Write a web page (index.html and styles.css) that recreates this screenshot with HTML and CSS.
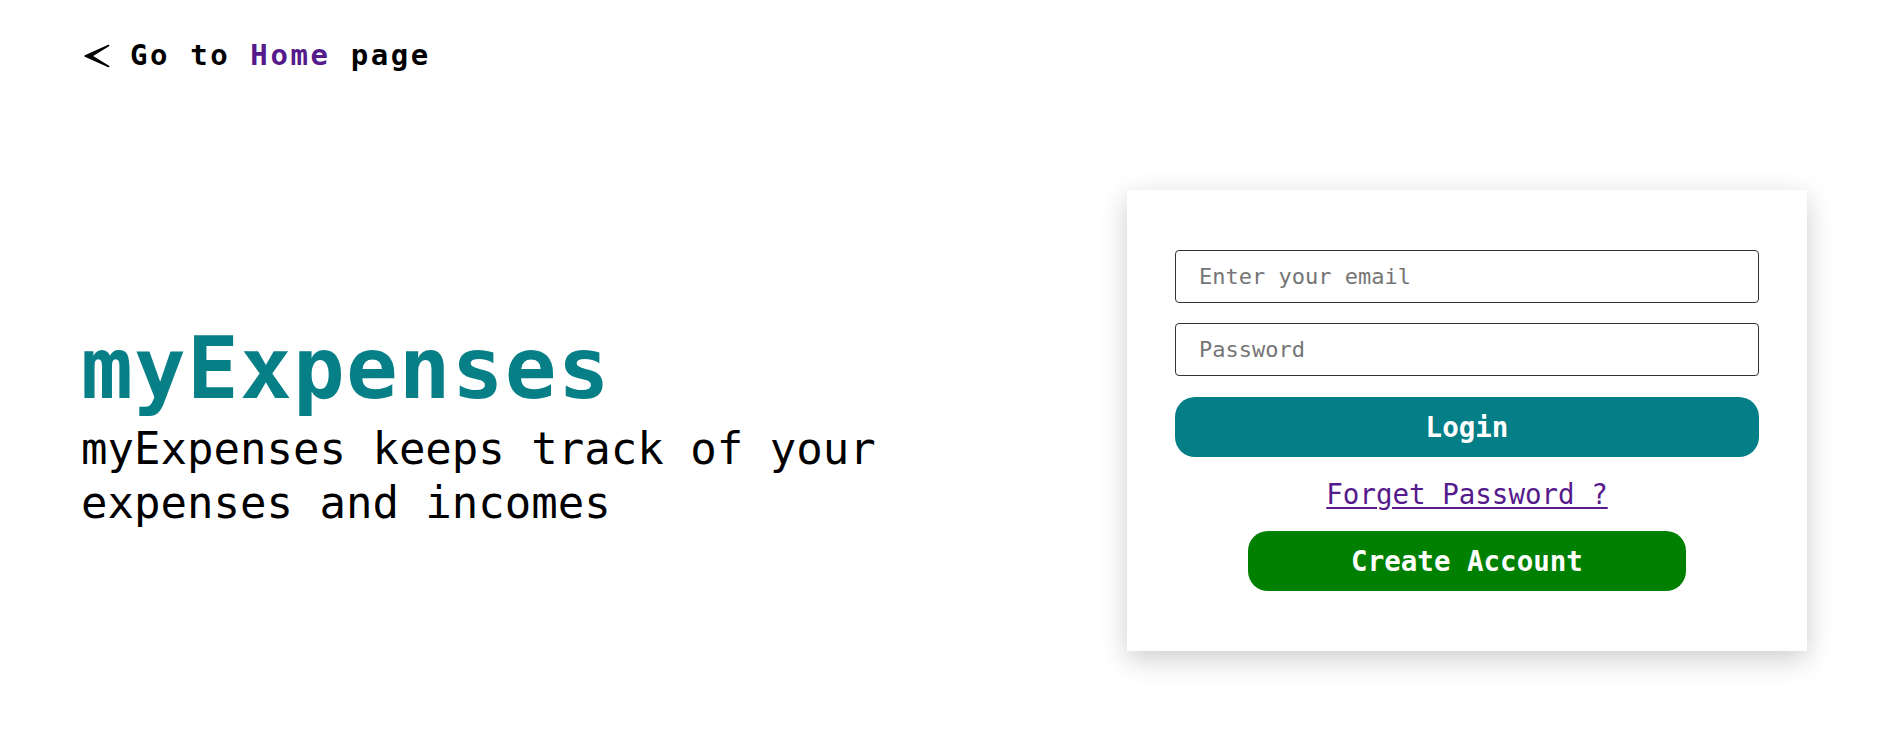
FILE: index.html
```html
<!DOCTYPE html>
<html lang="en">
<head>
<meta charset="utf-8">
<title>myExpenses - Login</title>
<link rel="stylesheet" href="styles.css">
</head>
<body>
<div class="page">
  <header class="top">
    <a class="back" href="#">
      <svg class="back-icon" width="26" height="24" viewBox="0 0 26 24" aria-hidden="true">
        <path d="M1.2 12 L24.6 1.6 L7.5 12 L24.6 22.4 Z" fill="#000" stroke="#000" stroke-width="1.7" stroke-linejoin="round"/>
      </svg>
      <span class="back-text">Go to <span class="home">Home</span> page</span>
    </a>
  </header>
  <main class="main">
    <section class="intro">
      <h1 class="brand">myExpenses</h1>
      <p class="tagline">myExpenses keeps track of your expenses and incomes</p>
    </section>
    <section class="card">
      <form class="form">
        <input class="field" type="email" placeholder="Enter your email">
        <input class="field" type="password" placeholder="Password">
        <button class="btn btn-login" type="button">Login</button>
        <a class="forget" href="#">Forget Password ?</a>
        <button class="btn btn-create" type="button">Create Account</button>
      </form>
    </section>
  </main>
</div>
</body>
</html>
```

FILE: styles.css
```css
* {
  box-sizing: border-box;
}

html, body {
  margin: 0;
  padding: 0;
  background: #ffffff;
}

body {
  font-family: "DejaVu Sans Mono", "Liberation Mono", monospace;
  color: #000;
}

.page {
  min-height: 738px;
  padding: 0 77px 0 84px;
}

.top {
  padding-top: 35px;
  height: 115px;
}

.back {
  display: inline-flex;
  align-items: center;
  gap: 21px;
  text-decoration: none;
  color: #000;
  font-weight: bold;
  font-size: 29px;
  line-height: 40px;
  letter-spacing: 2.6px;
}

.back-icon {
  display: block;
  flex: none;
  margin-top: 1px;
}

.back-text {
  margin-left: -1px;
}

.home {
  color: #551a8b;
}

.main {
  display: flex;
  justify-content: space-between;
  align-items: flex-start;
  padding-top: 75px;
}

.intro {
  width: 840px;
  margin-top: 128px;
  margin-left: -3px;
}

.brand {
  margin: 0;
  font-size: 86px;
  line-height: 100px;
  letter-spacing: 1.2px;
  font-weight: bold;
  color: #067f87;
}

.tagline {
  margin: 4px 0 0 0;
  font-size: 44px;
  line-height: 54px;
  font-weight: normal;
}

.card {
  width: 680px;
  background: #fff;
  padding: 60px 48px;
  box-shadow: 0 8px 26px rgba(0, 0, 0, 0.2);
}

.form {
  display: flex;
  flex-direction: column;
  align-items: center;
  gap: 21px;
}

.field {
  width: 100%;
  height: 53px;
  border: 1px solid #333;
  border-radius: 4px;
  padding: 0 23px;
  font-family: inherit;
  font-size: 22px;
  color: #000;
  background: #fff;
  outline: none;
}

.field + .field {
  margin-top: -1px;
}

.field::placeholder {
  color: #757575;
}

.btn {
  height: 60px;
  border: none;
  border-radius: 20px;
  color: #fff;
  font-family: inherit;
  font-weight: bold;
  font-size: 27.5px;
  cursor: pointer;
}

.btn-login {
  width: 100%;
  background: #047e87;
}

.btn-create {
  width: 438px;
  background: #008000;
}

.forget {
  display: block;
  font-size: 27.5px;
  line-height: 32px;
  color: #551a8b;
  text-decoration: underline;
  text-underline-offset: 3px;
}
```
